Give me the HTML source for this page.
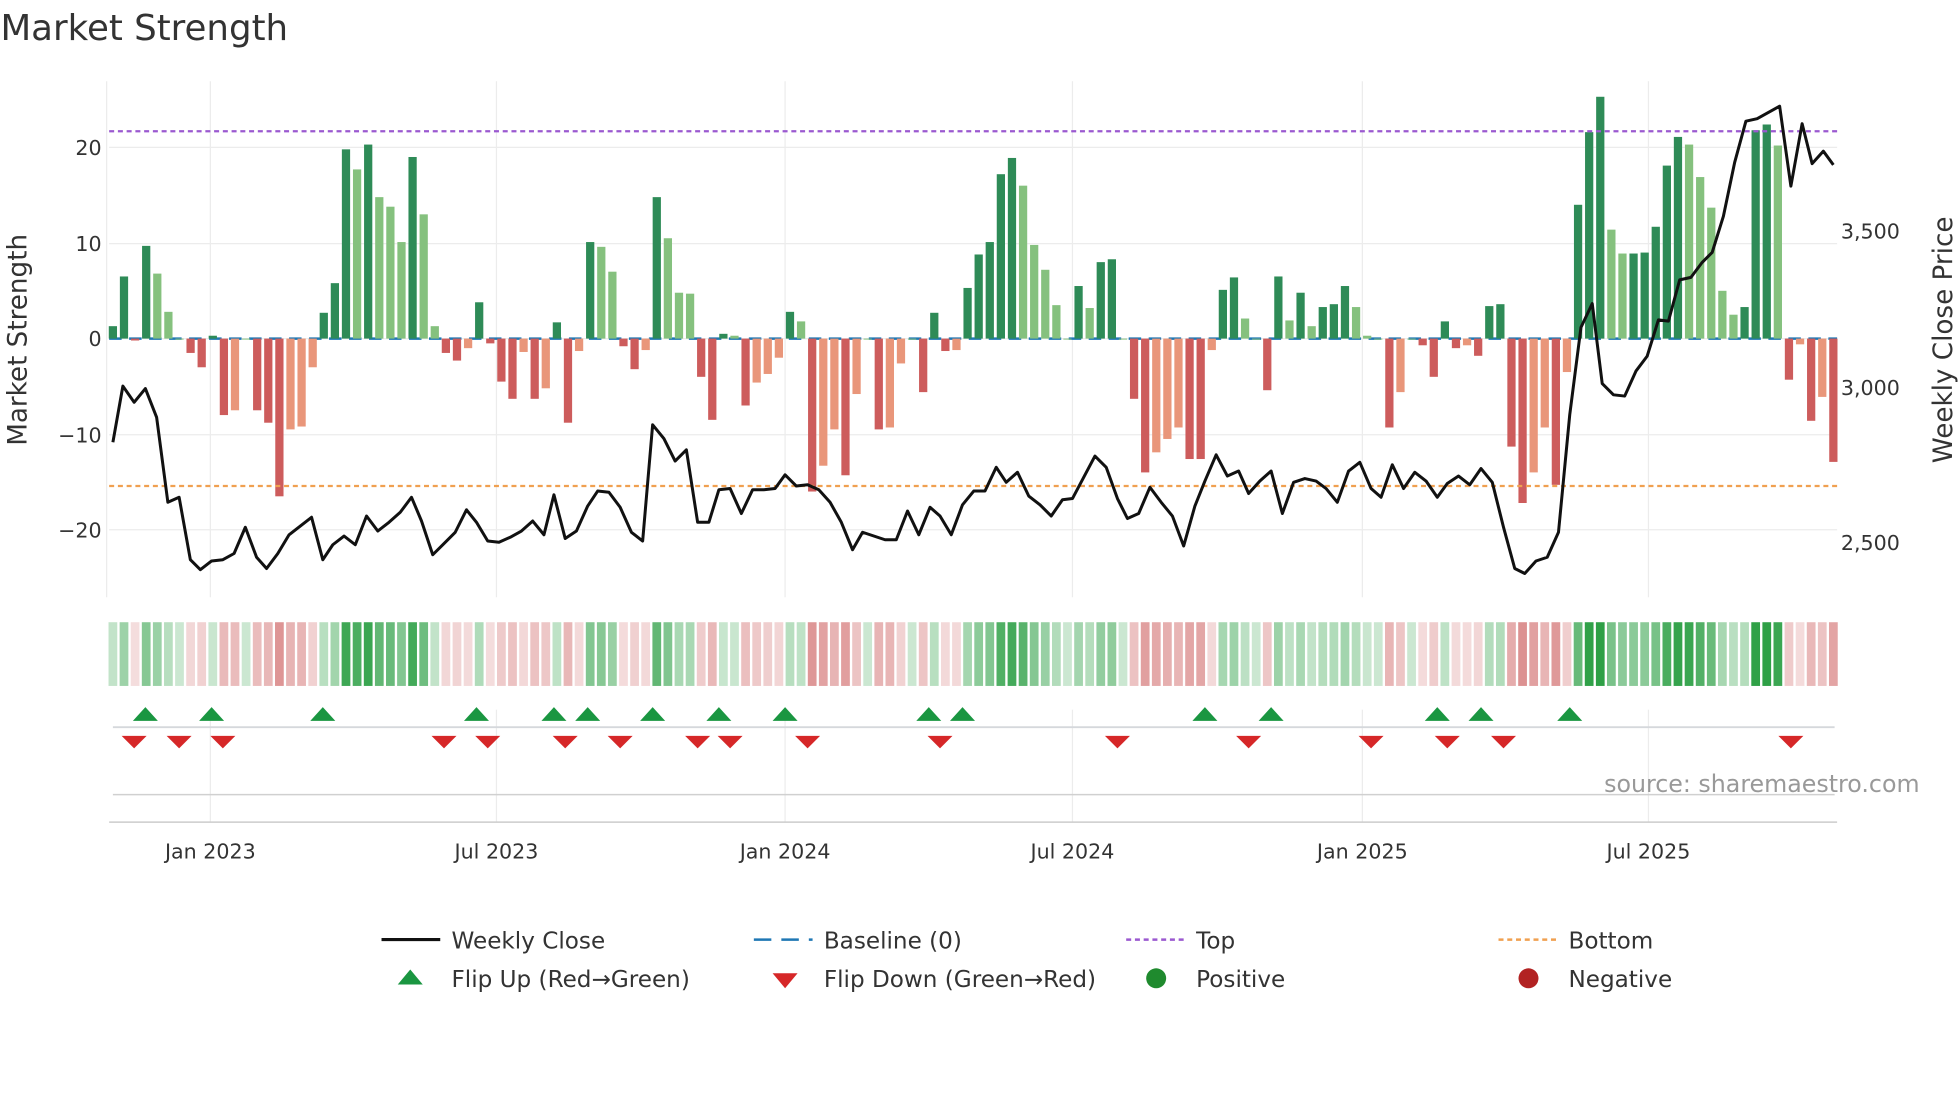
<!DOCTYPE html>
<html><head><meta charset="utf-8"><style>
html,body{margin:0;padding:0;background:#fff;width:1960px;height:1102px;overflow:hidden}
svg{display:block;font-family:"DejaVu Sans","Liberation Sans",sans-serif}
</style></head><body>
<svg id="s" width="1960" height="1102" viewBox="0 0 1568 882" xmlns="http://www.w3.org/2000/svg">
<rect width="1568" height="882" fill="#fff"/>
<text x="0" y="32" font-size="28.5" fill="#333">Market Strength</text>
<g id="grid" stroke="#ececec" stroke-width="1"></g>
<g id="bars"></g>
<g id="heat"></g>
<g id="marks"></g>
<g font-size="16.5" fill="#333">
<text x="81" y="124" text-anchor="end">20</text>
<text x="81" y="201" text-anchor="end">10</text>
<text x="81" y="277" text-anchor="end">0</text>
<text x="81" y="354" text-anchor="end">−10</text>
<text x="81" y="430" text-anchor="end">−20</text>
<text x="1473" y="191">3,500</text>
<text x="1473" y="316">3,000</text>
<text x="1473" y="440">2,500</text>
<text x="168" y="687" text-anchor="middle">Jan 2023</text>
<text x="397" y="687" text-anchor="middle">Jul 2023</text>
<text x="628" y="687" text-anchor="middle">Jan 2024</text>
<text x="858" y="687" text-anchor="middle">Jul 2024</text>
<text x="1090" y="687" text-anchor="middle">Jan 2025</text>
<text x="1319" y="687" text-anchor="middle">Jul 2025</text>
</g>
<text transform="translate(21,272) rotate(-90)" font-size="21" fill="#333" text-anchor="middle">Market Strength</text>
<text transform="translate(1562,272) rotate(-90)" font-size="21" fill="#333" text-anchor="middle">Weekly Close Price</text>
<text x="1536" y="634" font-size="19" fill="#999" text-anchor="end">source: sharemaestro.com</text>
<g font-size="18.5" fill="#333">
<line x1="305" y1="752" x2="352" y2="752" stroke="#111" stroke-width="2.5"/><text x="361" y="759">Weekly Close</text>
<line x1="603" y1="752" x2="650" y2="752" stroke="#1f77b4" stroke-width="2" stroke-dasharray="14,8"/><text x="659" y="759">Baseline (0)</text>
<line x1="901" y1="752" x2="948" y2="752" stroke="#9b59d0" stroke-width="2" stroke-dasharray="4,3"/><text x="957" y="759">Top</text>
<line x1="1199" y1="752" x2="1246" y2="752" stroke="#f0a050" stroke-width="2" stroke-dasharray="4,3"/><text x="1255" y="759">Bottom</text>
<polygon points="328,776 338,788 318,788" fill="#1a9641"/><text x="361" y="790">Flip Up (Red→Green)</text>
<polygon points="618,779 638,779 628,791" fill="#d62728"/><text x="659" y="790">Flip Down (Green→Red)</text>
<circle cx="925" cy="783" r="8" fill="#1f8a2e"/><text x="957" y="790">Positive</text>
<circle cx="1223" cy="783" r="8" fill="#b22222"/><text x="1255" y="790">Negative</text>
</g>
</svg>
<script>
var NS="http://www.w3.org/2000/svg";
function el(p,t,a){var e=document.createElementNS(NS,t);for(var k in a)e.setAttribute(k,a[k]);p.appendChild(e);return e;}
var g=document.getElementById('grid'),b=document.getElementById('bars'),h=document.getElementById('heat'),m=document.getElementById('marks');
[118,195,271,348,424].forEach(function(y){el(g,'line',{x1:87,x2:1470,y1:y,y2:y});});
[168,397,628,858,1090,1319].forEach(function(x){el(g,'line',{x1:x,x2:x,y1:65,y2:478});el(g,'line',{x1:x,x2:x,y1:568,y2:658});});
el(g,'line',{x1:85,x2:85,y1:65,y2:478});
el(g,'line',{x1:90,x2:1468,y1:582,y2:582,stroke:'#d5d8dc','stroke-width':1.5});
el(g,'line',{x1:90,x2:1468,y1:636,y2:636,stroke:'#d0d0d0','stroke-width':1.2});
el(g,'line',{x1:87,x2:1470,y1:658,y2:658,stroke:'#ccc','stroke-width':1.2});
var V=[1.3,6.5,-0.2,9.7,6.8,2.8,0,-1.5,-3,0.3,-8,-7.5,0,-7.5,-8.8,-16.5,-9.5,-9.2,-3,2.7,5.8,19.8,17.7,20.3,14.8,13.8,10.1,19,13,1.3,-1.5,-2.3,-1,3.8,-0.5,-4.5,-6.3,-1.4,-6.3,-5.2,1.7,-8.8,-1.3,10.1,9.6,7,-0.8,-3.2,-1.2,14.8,10.5,4.8,4.7,-4,-8.5,0.5,0.3,-7,-4.6,-3.7,-2,2.8,1.8,-16,-13.3,-9.5,-14.3,-5.8,0,-9.5,-9.3,-2.6,0,-5.6,2.7,-1.3,-1.2,5.3,8.8,10.1,17.2,18.9,16,9.8,7.2,3.5,0,5.5,3.2,8,8.3,0,-6.3,-14,-11.9,-10.5,-9.3,-12.6,-12.6,-1.2,5.1,6.4,2.1,0,-5.4,6.5,1.9,4.8,1.3,3.3,3.6,5.5,3.3,0.3,0,-9.3,-5.6,0,-0.7,-4,1.8,-1,-0.7,-1.8,3.4,3.6,-11.3,-17.2,-14,-9.3,-15.3,-3.5,14,21.6,25.3,11.4,8.9,8.9,9,11.7,18.1,21.1,20.3,16.9,13.7,5,2.5,3.3,21.8,22.4,20.2,-4.3,-0.6,-8.6,-6.1,-12.9];
var n=V.length,x0=90,dx=(1467-90)/(n-1);
el(b,'line',{x1:87,x2:1470,y1:271,y2:271,stroke:'#1f77b4','stroke-width':2,'stroke-dasharray':'10,6'});
for(var i=0;i<n;i++){var v=V[i],x=x0+i*dx,p=i?V[i-1]:0;var dark=Math.abs(v)>=Math.abs(p)||(v*p<0);
var c=v>=0?(dark?'#2e8b57':'#85c17e'):(dark?'#cd5c5c':'#e9967a');var y=271-v*7.65;
el(b,'rect',{x:x-3.3,width:6.6,y:Math.min(y,271),height:Math.max(Math.abs(v*7.65),0.8),fill:c});
var a=Math.min(0.25+Math.abs(v)/22*0.75,1);var hc=v>=0?'rgba(46,160,70,'+a+')':'rgba(200,80,80,'+(a*0.75)+')';
el(h,'rect',{x:x-3.5,width:7,y:498,height:51,fill:hc});}
el(b,'line',{x1:87,x2:1470,y1:105,y2:105,stroke:'#9b59d0','stroke-width':1.8,'stroke-dasharray':'4,3'});
el(b,'line',{x1:87,x2:1470,y1:389,y2:389,stroke:'#f0a050','stroke-width':1.8,'stroke-dasharray':'4,3'});
var P="90,354 98,309 107,322 116,311 125,334 134,402 143,398 152,448 160,456 169,449 178,448 187,443 196,422 205,446 213,455 222,443 231,428 240,421 249,414 258,448 266,436 275,429 284,436 293,413 302,425 311,418 320,410 329,398 337,417 346,444 355,435 364,426 373,408 381,418 390,433 399,434 408,430 417,425 426,417 435,428 443,396 452,431 461,425 470,405 478,393 487,394 496,406 505,426 514,433 522,340 531,351 540,369 549,360 558,418 567,418 575,392 584,391 593,411 602,392 611,392 620,391 628,380 637,389 646,388 655,392 664,402 673,418 682,440 690,426 699,429 708,432 717,432 726,409 735,428 744,406 752,413 761,428 770,404 779,393 788,393 797,374 805,386 814,378 823,397 832,404 841,413 850,400 858,399 867,382 876,365 885,374 894,399 902,415 911,411 920,390 929,402 938,413 947,437 956,405 964,385 973,364 982,381 991,377 999,395 1008,385 1017,377 1026,411 1035,386 1044,383 1053,385 1061,391 1070,402 1079,377 1088,370 1097,391 1105,398 1114,372 1123,391 1132,378 1141,385 1150,398 1158,387 1167,381 1176,388 1185,375 1194,386 1203,422 1212,455 1220,459 1229,449 1238,446 1247,426 1256,332 1265,262 1274,243 1282,307 1291,316 1300,317 1309,297 1318,285 1327,256 1335,257 1344,224 1353,222 1362,210 1370,202 1379,173 1388,130 1397,97 1406,95 1415,90 1424,85 1433,149 1442,99 1450,131 1459,121 1467,132";
el(b,'polyline',{points:P,fill:'none',stroke:'#111','stroke-width':2.4,'stroke-linejoin':'round'});
[116,169,258,381,443,470,522,575,628,743,770,964,1017,1150,1185,1256].forEach(function(x){el(m,'polygon',{points:(x)+',566 '+(x+10)+',577 '+(x-10)+',577',fill:'#1a9641'});});
[107,143,178,355,390,452,496,558,584,646,752,894,999,1097,1158,1203,1433].forEach(function(x){el(m,'polygon',{points:(x-10)+',589 '+(x+10)+',589 '+x+',599',fill:'#d62728'});});
</script>
</body></html>
